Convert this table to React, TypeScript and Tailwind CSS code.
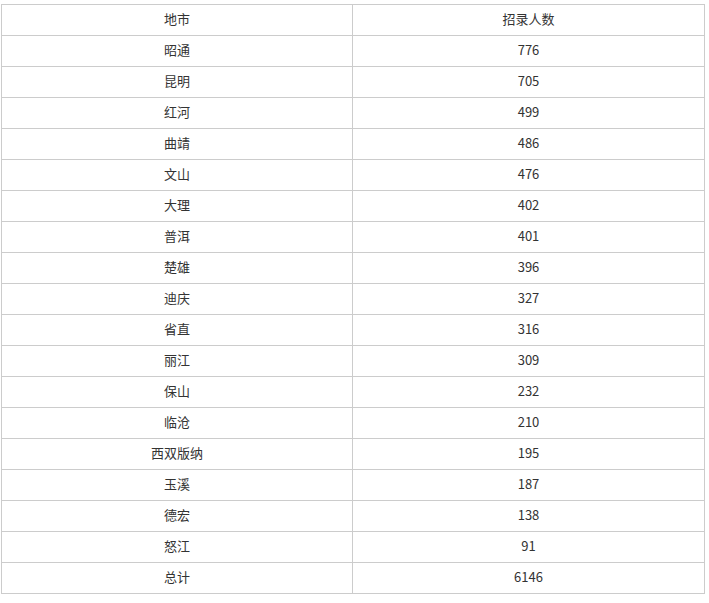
const rows: [string, string][] = [
  ["昭通", "776"],
  ["昆明", "705"],
  ["红河", "499"],
  ["曲靖", "486"],
  ["文山", "476"],
  ["大理", "402"],
  ["普洱", "401"],
  ["楚雄", "396"],
  ["迪庆", "327"],
  ["省直", "316"],
  ["丽江", "309"],
  ["保山", "232"],
  ["临沧", "210"],
  ["西双版纳", "195"],
  ["玉溪", "187"],
  ["德宏", "138"],
  ["怒江", "91"],
  ["总计", "6146"],
];

export default function App() {
  return (
    <div className="min-h-screen bg-white pt-[4px] pl-[1px] font-['Noto_Sans_CJK_SC',sans-serif] text-[13px] text-[#333]">
      <table className="w-[704px] border-collapse table-fixed">
        <thead>
          <tr className="h-[31px]">
            <th className="w-[351px] border border-[#ccc] pb-[2px] font-normal text-center">地市</th>
            <th className="border border-[#ccc] pb-[2px] font-normal text-center">招录人数</th>
          </tr>
        </thead>
        <tbody>
          {rows.map(([city, n]) => (
            <tr key={city} className="h-[31px]">
              <td className="border border-[#ccc] pb-[2px] text-center">{city}</td>
              <td className="border border-[#ccc] pb-[2px] text-center">{n}</td>
            </tr>
          ))}
        </tbody>
      </table>
    </div>
  );
}
